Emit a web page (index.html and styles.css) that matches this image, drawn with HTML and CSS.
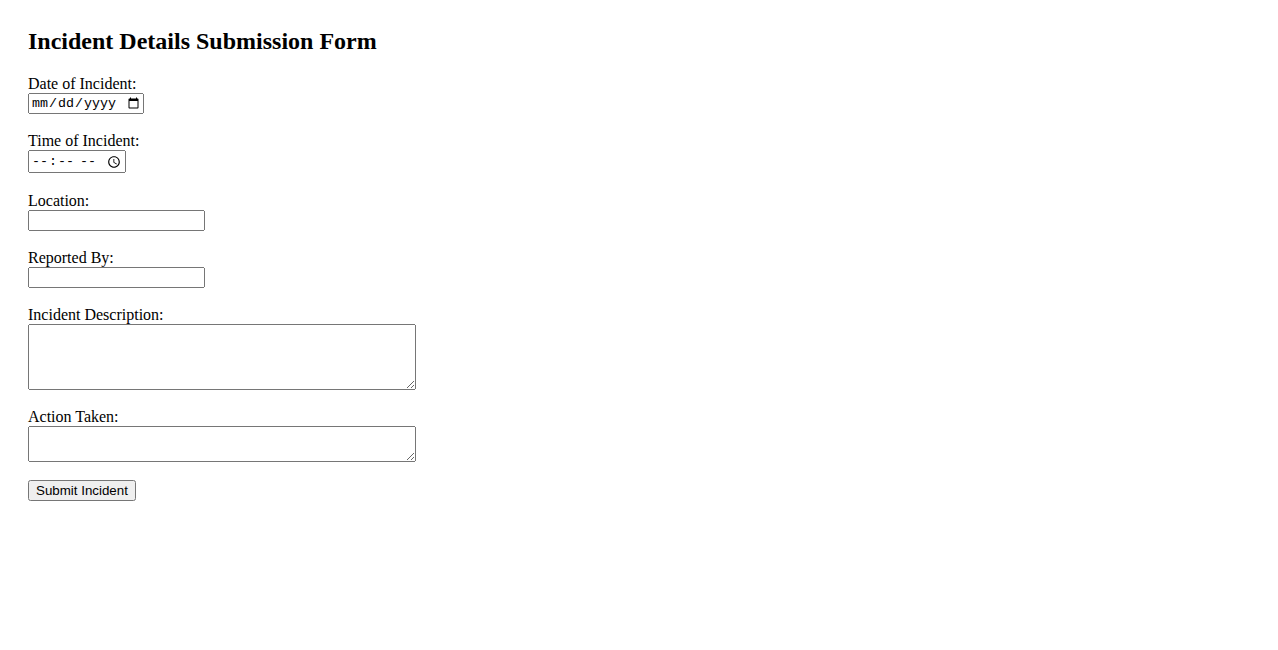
FILE: index.html
```html
<!DOCTYPE html>
<html lang="en">
<head>
<meta charset="utf-8">
<title>Incident Details Submission Form</title>
<link rel="stylesheet" href="styles.css">
</head>
<body>
<main class="page">
  <h2 class="title">Incident Details Submission Form</h2>
  <form class="form">
    <div class="field">
      <label class="label" for="date">Date of Incident:</label>
      <input class="control control-date" type="date" id="date" name="date">
    </div>
    <div class="field field-time">
      <label class="label" for="time">Time of Incident:</label>
      <input class="control control-time" type="time" id="time" name="time">
    </div>
    <div class="field">
      <label class="label" for="location">Location:</label>
      <input class="control control-text" type="text" id="location" name="location">
    </div>
    <div class="field">
      <label class="label" for="reported">Reported By:</label>
      <input class="control control-text" type="text" id="reported" name="reported">
    </div>
    <div class="field">
      <label class="label" for="description">Incident Description:</label>
      <textarea class="control control-area control-area-tall" id="description" name="description"></textarea>
    </div>
    <div class="field">
      <label class="label" for="action">Action Taken:</label>
      <textarea class="control control-area control-area-short" id="action" name="action"></textarea>
    </div>
    <div class="actions">
      <button class="submit" type="submit">Submit Incident</button>
    </div>
  </form>
</main>
</body>
</html>
```
FILE: styles.css
```css
html, body {
  background: #ffffff;
}

body {
  margin: 0;
  font-family: "Liberation Serif", "Times New Roman", serif;
  font-size: 16px;
  color: #000000;
}

.page {
  padding: 28px;
}

.title {
  margin: 0 0 19px;
  font-size: 24px;
  font-weight: bold;
  line-height: 27.6px;
}

.form {
  display: flex;
  flex-direction: column;
  gap: 17.6px;
}

.field {
  display: flex;
  flex-direction: column;
  align-items: flex-start;
}

.field-time {
  margin-bottom: 1px;
}

.label {
  display: block;
  line-height: 18.4px;
}

.control {
  box-sizing: border-box;
  margin: 0;
  font-size: 13.33px;
}

.control-date {
  width: 116px;
  height: 21px;
  font-family: "Liberation Mono", "DejaVu Sans Mono", monospace;
}

.control-time {
  width: 98px;
  height: 23px;
  font-family: "Liberation Mono", "DejaVu Sans Mono", monospace;
}

.control-text {
  width: 177px;
  height: 21px;
  font-family: "Liberation Sans", Arial, sans-serif;
}

.control-area {
  width: 388px;
  font-family: "Liberation Mono", monospace;
}

.control-area-tall {
  height: 66px;
}

.control-area-short {
  height: 36px;
}

.actions {
  display: flex;
}

.submit {
  box-sizing: border-box;
  height: 21px;
  margin: 0;
  padding: 1px 6px;
  font-family: "Liberation Sans", Arial, sans-serif;
  font-size: 13.33px;
}
```
